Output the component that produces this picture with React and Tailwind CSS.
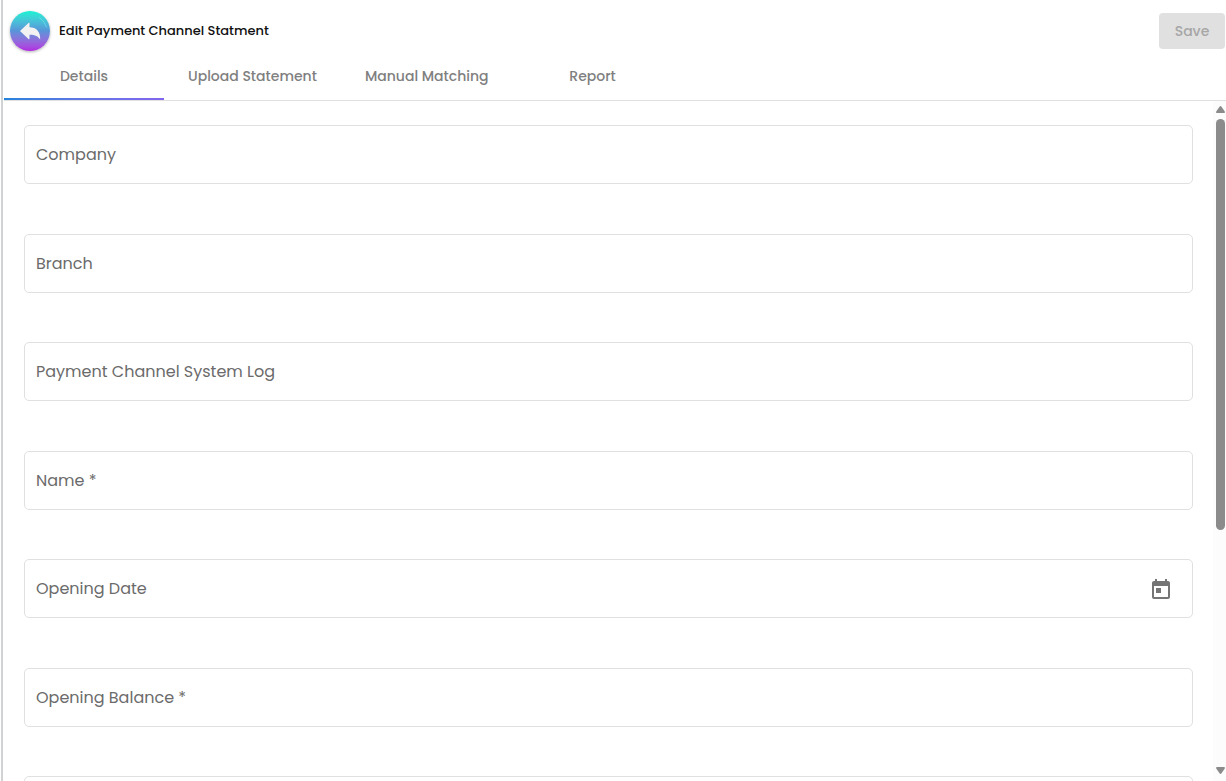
import React, { useState } from 'react';

const tabs = ['Details', 'Upload Statement', 'Manual Matching', 'Report'];

const fields = [
    { id: 'company', label: 'Company' },
    { id: 'branch', label: 'Branch' },
    { id: 'systemLog', label: 'Payment Channel System Log' },
    { id: 'name', label: 'Name', required: true },
    { id: 'openingDate', label: 'Opening Date', date: true },
    { id: 'openingBalance', label: 'Opening Balance', required: true },
    { id: 'notes' },
];

const BackIcon = () => (
    <svg className="w-10 h-10" viewBox="0 0 40 40" fill="none" aria-hidden="true">
        <path d="M10 20 L18.500 12 Q19.500 11.300 19.500 12.500 V16.300 C26.500 16.500 30.500 20.500 30.200 28.500 C28 25 25 23.600 19.500 23.700 V27.500 Q19.500 28.700 18.500 28 Z" fill="#f2f2f2" />
        <path d="M29.500 6.500 Q34.500 10 36.500 16" stroke="#7df7ee" strokeWidth="0.5" strokeLinecap="round" />
    </svg>
);

const CalendarIcon = () => (
    <svg className="w-6 h-6" viewBox="0 0 24 24" fill="currentColor" aria-hidden="true">
        <path d="M19 3h-1V1h-2v2H8V1H6v2H5c-1.110 0-1.990.9-1.990 2L3 19c0 1.100.890 2 2 2h14c1.100 0 2-.9 2-2V5c0-1.100-.9-2-2-2zm0 16H5V8h14v11zM7 10h5v5H7z" />
    </svg>
);

const Field = ({ id, label, required, date }) => {
    const [value, setValue] = useState('');

    return (
        <div className="relative flex items-center shrink-0 h-[59px] border border-[#e0e0e0] rounded-[5px] odd:mb-[50px] even:mb-[49px]">
            {label && value === '' && (
                <label htmlFor={id} className="absolute left-[11px] text-base text-[#6b6b6b] pointer-events-none">
                    {label}{required && ' *'}
                </label>
            )}
            <input
                id={id}
                type="text"
                value={value}
                aria-label={label || 'Notes'}
                onChange={(e) => setValue(e.target.value)}
                className="flex-1 min-w-0 h-full px-[11px] bg-transparent text-base outline-none"
            />
            {date && (
                <button type="button" aria-label="Open calendar" className="mr-[19px] pt-0.5 text-[#757575]">
                    <CalendarIcon />
                </button>
            )}
        </div>
    );
};

const ScrollRail = () => (
    <div className="flex flex-col items-center shrink-0 w-[13px] pt-[5px] pb-[7px] pl-0.5 bg-[#fcfcfc]" aria-hidden="true">
        <svg className="w-[9px] h-[7px] shrink-0" viewBox="0 0 9 7" fill="#8b8b8b">
            <path d="M4.500 0 Q5 0 5.500 .8 L8.800 5.500 Q9.200 7 8 7 H1 Q-.2 7 .2 5.500 L3.500 .8 Q4 0 4.500 0Z" />
        </svg>
        <div className="flex-1 my-1.5">
            <div className="w-[9px] h-[64%] rounded-full bg-[#8b8b8b]" />
        </div>
        <svg className="w-[9px] h-[7px] shrink-0" viewBox="0 0 9 7" fill="#8b8b8b">
            <path d="M4.500 7 Q5 7 5.500 6.200 L8.800 1.500 Q9.200 0 8 0 H1 Q-.2 0 .2 1.500 L3.500 6.200 Q4 7 4.500 7Z" />
        </svg>
    </div>
);

const App = () => {
    const [active, setActive] = useState('Details');

    return (
        <div className="h-screen pl-px bg-white font-[Poppins,Inter,sans-serif]">
            <div className="flex flex-col h-full pl-px border-l-2 border-[#d0d2d4]">
                <header className="flex items-center shrink-0 pl-1.5 pr-px pt-[11px]">
                    <button type="button" aria-label="Back" className="rounded-full bg-linear-to-b from-[#0cf2d4] via-[#5793d8] to-[#b127e0] shadow-[0_1px_3px_rgba(0,0,0,0.3)]">
                        <BackIcon />
                    </button>
                    <h1 className="ml-[9px] text-[13px] font-medium text-[#111111]">Edit Payment Channel Statment</h1>
                    <button type="button" disabled className="ml-auto w-[66px] h-9 rounded bg-[#e0e0e0] text-sm font-medium text-[#a6a6a6]">
                        Save
                    </button>
                </header>

                <nav role="tablist" className="flex shrink-0 border-b border-[#e0e0e0]">
                    {tabs.map((tab) => (
                        <button
                            key={tab}
                            type="button"
                            role="tab"
                            aria-selected={active === tab}
                            onClick={() => setActive(tab)}
                            className="flex flex-col items-center min-w-40 h-[49px] text-sm font-medium text-[#7f7f7f]"
                        >
                            <span className="flex-1 flex items-center px-6 pt-0.5">{tab}</span>
                            <span className={active === tab ? 'w-full h-0.5 bg-linear-to-r from-[#2283dd] to-[#8265ee]' : 'w-full h-0.5'} />
                        </button>
                    ))}
                </nav>

                <main className="flex flex-1 min-h-0">
                    <form className="flex flex-col flex-1 min-w-0 pt-6 px-5 overflow-hidden">
                        {fields.map((field) => (
                            <Field key={field.id} {...field} />
                        ))}
                    </form>
                    <ScrollRail />
                </main>
            </div>
        </div>
    );
};

export default App;
